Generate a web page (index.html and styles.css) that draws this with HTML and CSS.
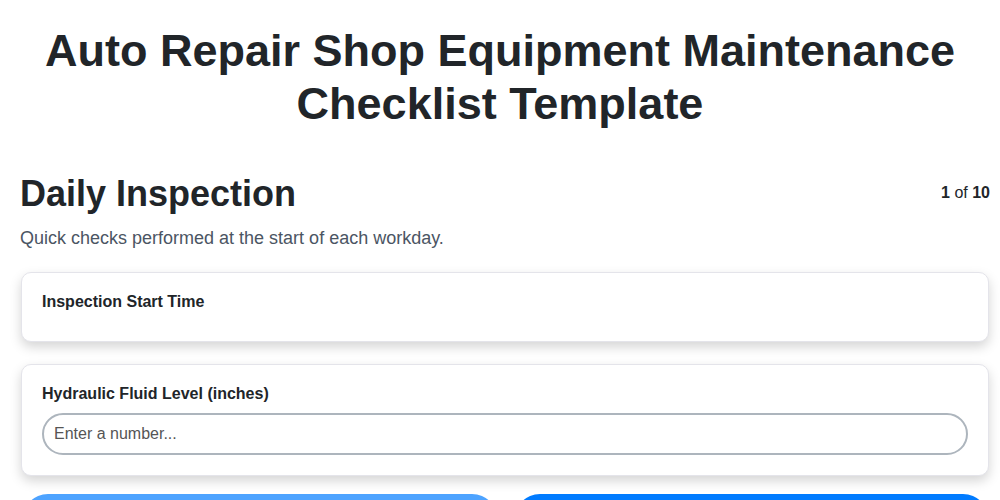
FILE: index.html
```html
<!DOCTYPE html>
<html lang="en">
<head>
  <meta charset="UTF-8">
  <meta name="viewport" content="width=device-width, initial-scale=1">
  <title>Auto Repair Shop Equipment Maintenance Checklist Template</title>
  <link rel="stylesheet" href="styles.css">
</head>
<body>
<div class="page">
  <h1 class="doc-title">Auto Repair Shop Equipment Maintenance Checklist Template</h1>
  <div class="step">
    <div class="section-head">
      <h2 class="section-title">Daily Inspection</h2>
      <div class="step-count"><b>1</b> of <b>10</b></div>
    </div>
    <p class="section-desc">Quick checks performed at the start of each workday.</p>
    <div class="fields">
      <div class="field-card">
        <label class="field-label">Inspection Start Time</label>
      </div>
      <div class="field-card">
        <label class="field-label" for="fluidLevel">Hydraulic Fluid Level (inches)</label>
        <input class="field-input" type="number" id="fluidLevel" placeholder="Enter a number...">
      </div>
    </div>
    <div class="nav-row">
      <button class="nav-btn prev" disabled>Previous</button>
      <button class="nav-btn next">Next</button>
    </div>
  </div>
</div>
</body>
</html>
```

FILE: styles.css
```css
body { margin: 0; background: #fff; font-family: "Liberation Sans", Arial, sans-serif; color: #212529; }
.page { padding: 24px 10px 20px; }
.doc-title { font-size: 45px; line-height: 1.18; font-weight: bold; text-align: center; margin: 0 0 42px; }
.step { margin-left: 10px; }
.section-head { display: flex; justify-content: space-between; align-items: flex-start; }
.section-title { font-size: 36px; line-height: 1.2; margin: 0; }
.step-count { font-size: 16px; margin-top: 12px; }
.section-desc { font-size: 18px; color: #4b5563; margin: 13px 0 23px; line-height: 21px; }
.fields { display: flex; flex-direction: column; gap: 22px; margin: 0 1px 18px 1px; }
.field-card { background: #fff; border: 1px solid #e4e4ea; border-radius: 10px; box-shadow: 0 5px 12px rgba(0,0,0,0.17); padding: 20px; }
.field-label { display: block; font-weight: bold; font-size: 16px; line-height: 18px; margin-bottom: 10px; }
.field-input { display: block; width: 100%; box-sizing: border-box; height: 42px; border: 2px solid #adb5bd; border-radius: 21px; padding: 0 10px; font-size: 16px; font-family: inherit; color: #212529; }
.field-input::placeholder { color: #555; }
.nav-row { display: flex; gap: 16px; margin: 0 1px 0 2px; }
.nav-btn { flex: 1; height: 52px; border: none; border-radius: 26px; color: #fff; font-size: 18px; font-family: inherit; font-weight: bold; }
.nav-btn.prev { background: #4da3ff; }
.nav-btn.next { background: #007bff; }
```
